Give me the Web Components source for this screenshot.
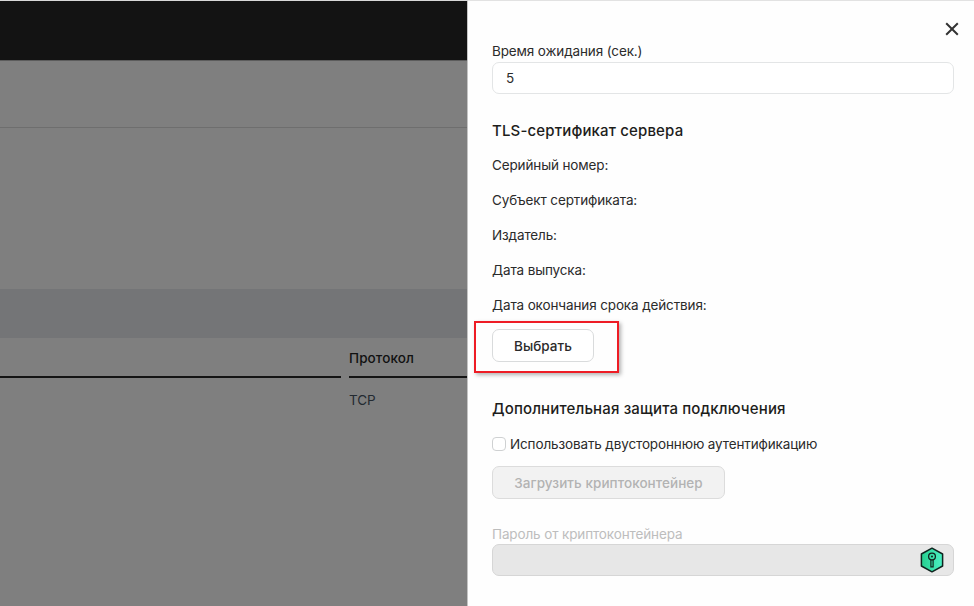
<!DOCTYPE html>
<html lang="ru">
<head>
<meta charset="utf-8">
<title>TLS</title>
<style>
  html, body { margin: 0; padding: 0; height: 100%; overflow: hidden; background: #fff; }
  body { font-family: Inter, "Noto Sans", sans-serif; font-size: 13.5px; letter-spacing: -0.13px; color: #1d1d1b; }
</style>
</head>
<body>
<app-shell>
  <dimmed-page slot="page"></dimmed-page>
  <side-drawer slot="drawer">
    <text-field label="Время ожидания (сек.)" value="5"></text-field>
    <section-title style="margin-top:27px">TLS-сертификат сервера</section-title>
    <info-row style="margin-top:14px">Серийный номер:</info-row>
    <info-row>Субъект сертификата:</info-row>
    <info-row>Издатель:</info-row>
    <info-row>Дата выпуска:</info-row>
    <info-row>Дата окончания срока действия:</info-row>
    <action-button style="margin-top:14px" width="102" marked>Выбрать</action-button>
    <section-title style="margin-top:37px">Дополнительная защита подключения</section-title>
    <check-row style="margin-top:15px">Использовать двустороннюю аутентификацию</check-row>
    <action-button style="margin-top:12px" width="233" disabled>Загрузить криптоконтейнер</action-button>
    <text-field style="margin-top:25px;--gap:0px" label="Пароль от криптоконтейнера" disabled key></text-field>
  </side-drawer>
</app-shell>

<script>
class AppShell extends HTMLElement {
  connectedCallback() {
    this.attachShadow({ mode: 'open' });
    this.shadowRoot.innerHTML = `
      <style>
        :host { display: flex; width: 974px; height: 606px; overflow: hidden; }
        .page { flex: 0 0 467px; min-width: 0; }
        .drawer { flex: 1; min-width: 0; }
      </style>
      <div class="page"><slot name="page"></slot></div>
      <div class="drawer"><slot name="drawer"></slot></div>
    `;
  }
}

class DimmedPage extends HTMLElement {
  connectedCallback() {
    this.attachShadow({ mode: 'open' });
    this.shadowRoot.innerHTML = `
      <style>
        :host { display: flex; flex-direction: column; height: 606px; background: #7f7f7f; }
        .top { height: 59px; border-top: 1px solid #d8d8d8; background: #131313; border-bottom: 1px solid #5c5c5c; flex: none; }
        .sub { height: 66px; border-bottom: 1px solid #6e6e6e; flex: none; }
        .band { height: 49px; margin-top: 161px; background: #747577; flex: none; }
        .table { display: grid; grid-template-columns: 341px 1fr; column-gap: 8px; }
        .head { height: 38px; border-bottom: 2px solid #141414; font-weight: 500; font-size: 13.5px; letter-spacing: 0.1px; line-height: 41px; color: #111; }
        .cell { font-size: 13.5px; line-height: 20px; padding-top: 12px; color: #232a31; }
      </style>
      <div class="top"></div>
      <div class="sub"></div>
      <div class="band"></div>
      <div class="table">
        <div class="head"></div><div class="head">Протокол</div>
        <div></div><div class="cell">TCP</div>
      </div>
    `;
  }
}

class SideDrawer extends HTMLElement {
  connectedCallback() {
    this.attachShadow({ mode: 'open' });
    this.shadowRoot.innerHTML = `
      <style>
        :host { display: block; position: relative; height: 606px; box-sizing: border-box; padding: 40px 20px 0 24px; background: #fefefe; border-top: 1px solid #e2e2e2; border-left: 1px solid #c4c4c4; }
        .close { position: absolute; top: 21px; right: 15px; width: 14px; height: 14px; }
      </style>
      <svg class="close" viewBox="0 0 14 14" fill="none" stroke="#333" stroke-width="2"><path d="M1.2 1.2l11.6 11.6M12.8 1.2L1.2 12.8"/></svg>
      <slot></slot>
    `;
  }
}

class TextField extends HTMLElement {
  connectedCallback() {
    const disabled = this.hasAttribute('disabled');
    const key = this.hasAttribute('key') ? `
      <svg class="key" viewBox="0 0 24 26">
        <defs><linearGradient id="g" x1="0" y1="0" x2="1" y2="0"><stop offset="0" stop-color="#26cf8f"/><stop offset="1" stop-color="#4cf0c4"/></linearGradient></defs>
        <path d="M12 1.2 22.6 7v12L12 24.8 1.4 19V7z" fill="url(#g)" stroke="#10241f" stroke-width="1.5" stroke-linejoin="round"/>
        <circle cx="12" cy="9.6" r="3.4" fill="none" stroke="#10241f" stroke-width="1.3"/>
        <circle cx="12" cy="9.6" r="1" fill="#10241f"/>
        <path d="M10.9 13v6.8h2.2V13" fill="none" stroke="#10241f" stroke-width="1.2"/>
      </svg>` : '';
    this.attachShadow({ mode: 'open' });
    this.shadowRoot.innerHTML = `
      <style>
        :host { display: block; }
        label { display: block; line-height: 20px; color: ${disabled ? '#bdbdbd' : '#2b2b2b'}; }
        .box { display: flex; align-items: center; justify-content: space-between; height: 32px; margin-top: var(--gap, 1px); padding: 0 10px 0 13px; box-sizing: border-box; border: 1px solid ${disabled ? '#d6d6d6' : '#e3e5e6'}; border-radius: 7px; background: ${disabled ? '#e7e7e7' : '#fff'}; color: #2b2b2b; }
        .key { width: 24px; height: 26px; flex: none; margin-left: auto; margin-right: -1px; }
      </style>
      <label>${this.getAttribute('label')}</label>
      <div class="box"><span>${this.getAttribute('value') || ''}</span>${key}</div>
    `;
  }
}

class SectionTitle extends HTMLElement {
  connectedCallback() {
    this.attachShadow({ mode: 'open' });
    this.shadowRoot.innerHTML = `
      <style>
        :host { display: block; font-size: 15px; font-weight: 500; letter-spacing: 0.15px; line-height: 20px; color: #1d1d1b; }
      </style>
      <slot></slot>
    `;
  }
}

class InfoRow extends HTMLElement {
  connectedCallback() {
    this.attachShadow({ mode: 'open' });
    this.shadowRoot.innerHTML = `
      <style>
        :host { display: block; height: 35px; line-height: 20px; color: #2b2b2b; }
        :host(:last-of-type) { height: 20px; }
      </style>
      <slot></slot>
    `;
  }
}

class ActionButton extends HTMLElement {
  connectedCallback() {
    const disabled = this.hasAttribute('disabled');
    const mark = this.hasAttribute('marked') ? '<div class="mark"></div>' : '';
    this.attachShadow({ mode: 'open' });
    this.shadowRoot.innerHTML = `
      <style>
        :host { display: block; position: relative; width: ${this.getAttribute('width')}px; }
        button { display: block; width: 100%; height: 33px; padding: 0; box-sizing: border-box; border: 1px solid ${disabled ? '#dcdcdc' : '#d9dbdc'}; border-radius: 7px; background: ${disabled ? '#f2f2f2' : '#fff'}; color: ${disabled ? '#b3b3b3' : '#2b2b2b'}; font: 500 13.5px Inter, "Noto Sans", sans-serif; letter-spacing: 0.05px; }
        .mark { position: absolute; left: -18px; top: -8px; width: 145px; height: 52px; box-sizing: border-box; border: 2px solid #ee1c25; box-shadow: 2px 2px 4px rgba(0,0,0,.3); pointer-events: none; }
      </style>
      <button ${disabled ? 'disabled' : ''}><slot></slot></button>
      ${mark}
    `;
  }
}

class CheckRow extends HTMLElement {
  connectedCallback() {
    this.attachShadow({ mode: 'open' });
    this.shadowRoot.innerHTML = `
      <style>
        :host { display: flex; align-items: center; gap: 4px; line-height: 20px; color: #2b2b2b; }
        .box { width: 14px; height: 14px; box-sizing: border-box; border: 1px solid #cfd1d2; border-radius: 4px; background: #fff; flex: none; }
      </style>
      <span class="box"></span><slot></slot>
    `;
  }
}

customElements.define('app-shell', AppShell);
customElements.define('dimmed-page', DimmedPage);
customElements.define('side-drawer', SideDrawer);
customElements.define('text-field', TextField);
customElements.define('section-title', SectionTitle);
customElements.define('info-row', InfoRow);
customElements.define('action-button', ActionButton);
customElements.define('check-row', CheckRow);
</script>
</body>
</html>
